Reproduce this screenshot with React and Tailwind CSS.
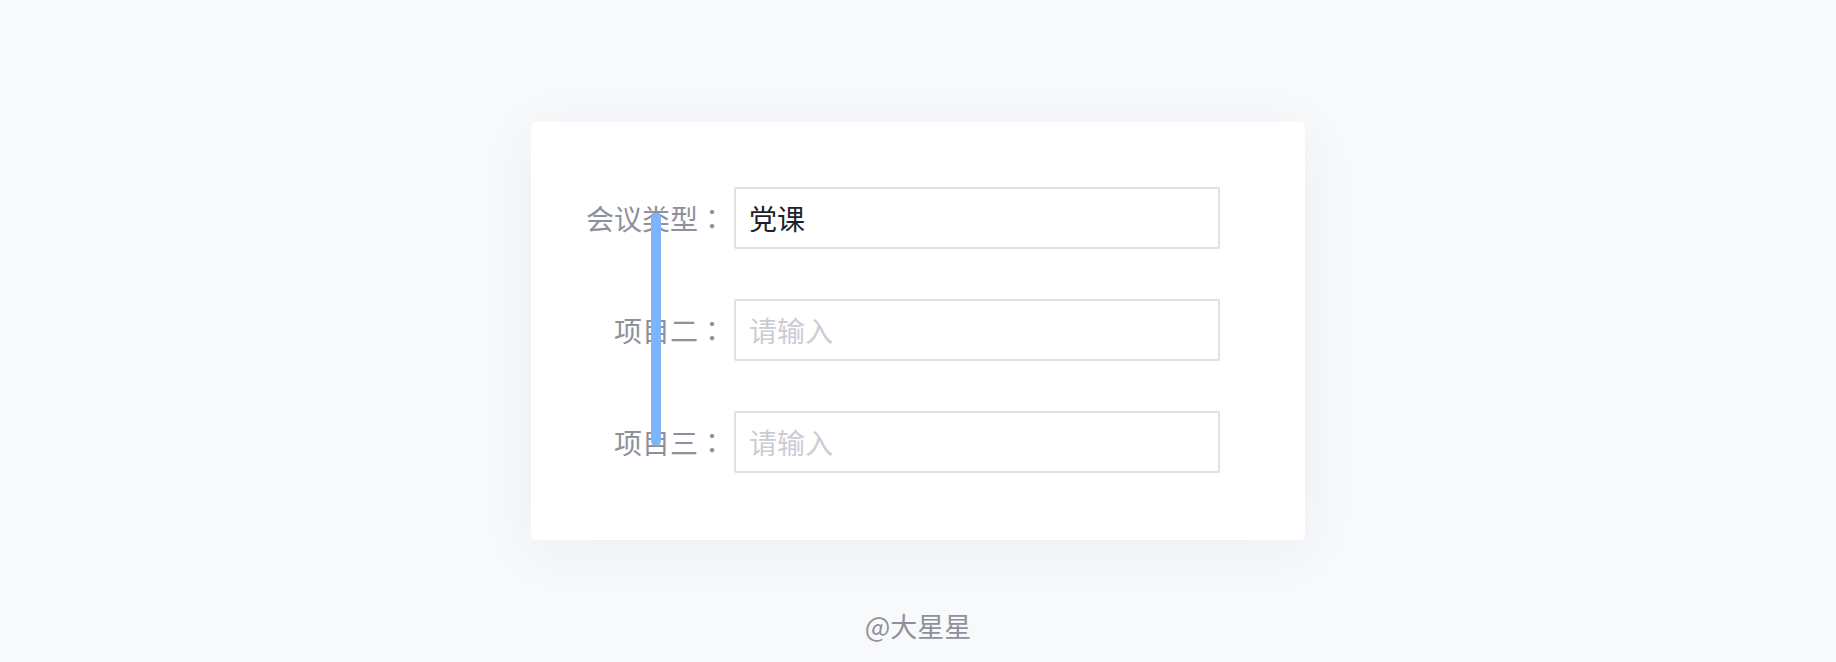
const font = { fontFamily: '"Noto Sans CJK SC", "Noto Sans", sans-serif' };

const rows = [
  { label: "会议类型", value: "党课" },
  { label: "项目二", value: "" },
  { label: "项目三", value: "" },
];

export default function App() {
  return (
    <div
      className="flex min-h-screen flex-col items-center bg-[#f8f9fb] pt-[122px]"
      style={font}
    >
      <div className="relative h-[418px] w-[774px] rounded-[5px] bg-white pl-[50px] pt-[65px] shadow-[0_10px_60px_rgba(30,40,80,0.05)]">
        <div className="flex flex-col gap-[50px]">
          {rows.map((row) => (
            <div key={row.label} className="flex h-[62px] items-center">
              <label className="w-[145px] whitespace-nowrap text-right text-[28px] leading-none text-[#8e919b]">
                {row.label}
                <span className="font-['Noto_Sans_CJK_TC',sans-serif]">：</span>
              </label>
              <input
                readOnly
                defaultValue={row.value}
                placeholder="请输入"
                className="ml-[8px] h-[62px] w-[486px] rounded-[2px] border-2 border-[#dfe1e8] bg-white px-[13px] text-[28px] text-[#1f2329] outline-none placeholder:text-[#cbcdd4]"
              />
            </div>
          ))}
        </div>
        <div className="absolute left-[120px] top-[91px] h-[233px] w-[10px] rounded-full bg-[#7cb5fc]" />
      </div>
      <div className="mt-[68px] text-[27px] leading-[36px] text-[#8e919b]">
        @大星星
      </div>
    </div>
  );
}
